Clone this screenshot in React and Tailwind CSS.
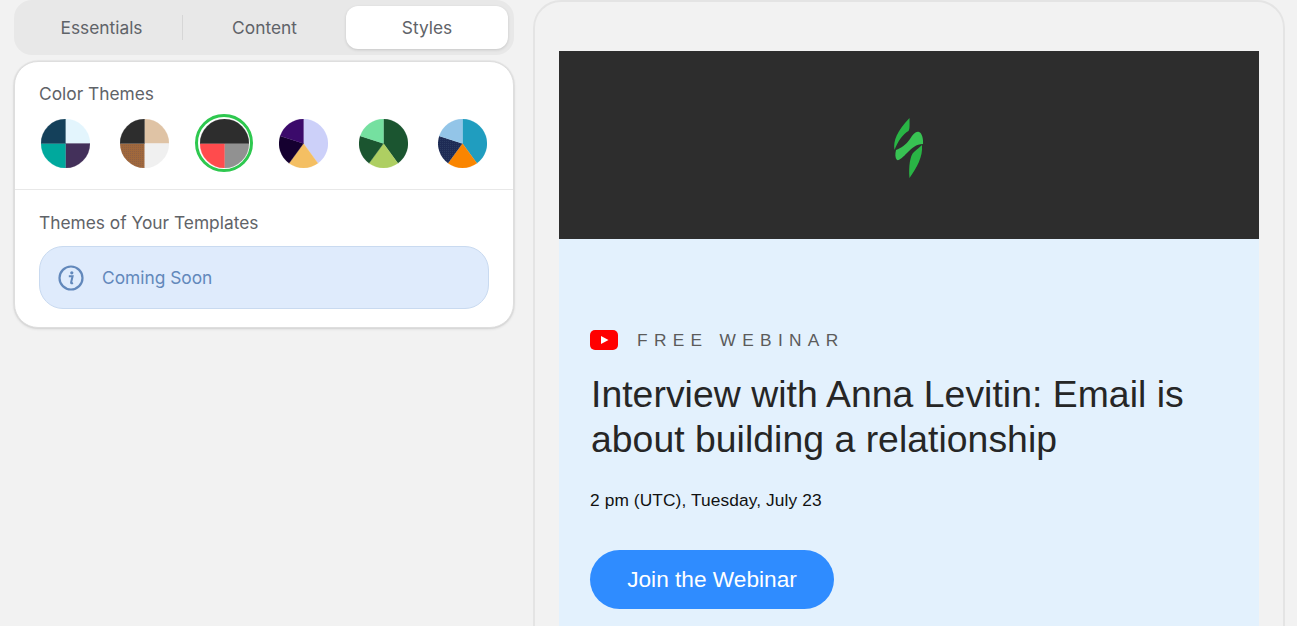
const Pie = ({ segs, id }) => {
  const R = 24.5;
  const pt = (deg) => {
    const a = (deg * Math.PI) / 180;
    return `${(R + R * Math.sin(a)).toFixed(2)} ${(R - R * Math.cos(a)).toFixed(2)}`;
  };
  return (
    <svg width="49" height="49" viewBox="0 0 49 49" className="block">
      <defs>
        <pattern id={`dots-${id}`} width="2" height="2" patternUnits="userSpaceOnUse">
          <rect width="2" height="2" fill={segs.find((s) => s.dot)?.c || "none"} />
          <rect width="1" height="1" fill={segs.find((s) => s.dot)?.dot || "none"} />
        </pattern>
      </defs>
      {segs.map((s, i) => (
        <path
          key={i}
          d={`M24.5 24.5L${pt(s.from)}A${R} ${R} 0 ${s.to - s.from > 180 ? 1 : 0} 1 ${pt(s.to)}Z`}
          fill={s.dot ? `url(#dots-${id})` : s.c}
          stroke={s.dot ? "none" : s.c}
          strokeWidth="0.25"
        />
      ))}
    </svg>
  );
};

const themes = [
  [
    { from: 0, to: 90, c: "#e3f5fd" },
    { from: 90, to: 180, c: "#43305a" },
    { from: 180, to: 270, c: "#00a99d" },
    { from: 270, to: 360, c: "#14405a" },
  ],
  [
    { from: 0, to: 90, c: "#dfc3a5" },
    { from: 90, to: 180, c: "#f0f0f0" },
    { from: 180, to: 270, c: "#a0683c", dot: "#8f6044" },
    { from: 270, to: 360, c: "#2d2d2d" },
  ],
  [
    { from: 90, to: 180, c: "#919191" },
    { from: 180, to: 270, c: "#ff4b4d" },
    { from: 270, to: 450, c: "#2d2d2d" },
  ],
  [
    { from: 0, to: 144, c: "#ccd0f9" },
    { from: 144, to: 216, c: "#f4bf63" },
    { from: 216, to: 288, c: "#150030" },
    { from: 288, to: 360, c: "#3b0a6b" },
  ],
  [
    { from: 0, to: 144, c: "#1b5530" },
    { from: 144, to: 216, c: "#aecf62" },
    { from: 216, to: 288, c: "#1b5530" },
    { from: 288, to: 360, c: "#75e0a0" },
  ],
  [
    { from: 0, to: 144, c: "#209dbf" },
    { from: 144, to: 216, c: "#fa8500" },
    { from: 216, to: 288, c: "#1e2b55", dot: "#2a3a60" },
    { from: 288, to: 360, c: "#93c5e8" },
  ],
];

const Logo = () => (
  <svg width="80" height="85" viewBox="0 0 80 85" className="block ml-[1px] mt-[4px]">
    <path d="M39.5 13C39.5 19 40 24 38.5 26C33 29 28 36 24.5 45C23 36 27 26 39.5 13Z" fill="#29b545" />
    <path d="M26 45C31 43 36 40 40 34C43 29 46 26 49 27C52 28 53.5 34 53 39C46 39 42 43 37 48C33 52 29 56 27 55C25 53 25 49 26 45Z" fill="#38c253" />
    <path d="M52 40C53 52 47 62 39.5 73C38.5 62 40 50 44 47C47 44 50 42 52 40Z" fill="#29b545" />
  </svg>
);

export default function App() {
  return (
    <div className="h-[626px] overflow-hidden bg-[#f2f2f2] flex items-start font-['Inter',sans-serif]">
      <div className="w-[500px] ml-[14px] shrink-0">
        <div className="h-[55px] bg-[#e8e8e8] rounded-[18px] px-[6px] pt-[6px] grid grid-cols-[163px_163px_162px] text-[17.33px] text-[#5f6368]">
          <div className="h-[43px] flex items-center justify-center pt-px relative">
            Essentials
            <span className="absolute right-0 top-[9px] h-[25px] w-px bg-[#d6d6d6]" />
          </div>
          <div className="h-[43px] flex items-center justify-center pt-px">Content</div>
          <div className="h-[43px] flex items-center justify-center pt-px bg-white rounded-[12px] shadow-[0_1px_3px_rgba(0,0,0,0.15)]">
            Styles
          </div>
        </div>

        <div className="mt-[6px] bg-white border border-[#dedede] rounded-[24px] shadow-[0_0_0_1px_rgba(0,0,0,0.03),0_1px_3px_rgba(0,0,0,0.12)] h-[267px]">
          <div className="px-[24px] pt-[21px] h-[128px] border-b border-[#e8e8e8]">
            <div className="text-[17.33px] leading-[22px] text-[#5f6368]">Color Themes</div>
            <div className="mt-[9px] -mx-[3px] flex justify-between">
              {themes.map((segs, i) => (
                <div
                  key={i}
                  className={
                    i === 2
                      ? "w-[58px] h-[58px] rounded-full border-[3px] border-[#2ec84f] flex items-center justify-center"
                      : "w-[58px] h-[58px] flex items-center justify-center"
                  }
                >
                  <Pie segs={segs} id={i} />
                </div>
              ))}
            </div>
          </div>
          <div className="px-[24px] pt-[22px]">
            <div className="text-[17.33px] leading-[22px] text-[#5f6368]">Themes of Your Templates</div>
            <div className="mt-[12px] h-[63px] rounded-[24px] bg-[#dfebfc] border border-[#c9daf0] flex items-center pl-[18px] gap-[18px] text-[17.33px] text-[#6288bb]">
              <svg width="26" height="26" viewBox="0 0 26 26" fill="none">
                <circle cx="13" cy="13" r="11.5" stroke="#6288bb" strokeWidth="2.2" />
                <circle cx="13.8" cy="7.8" r="1.6" fill="#6288bb" />
                <path d="M10.8 11.2H14.6L13.1 17.4C12.9 18.4 13.5 18.6 15 18" stroke="#6288bb" strokeWidth="2" fill="none" />
              </svg>
              <span>Coming Soon</span>
            </div>
          </div>
        </div>
      </div>

      <div className="ml-[19px] w-[752px] h-[700px] shrink-0 bg-[#f2f2f2] border-2 border-[#e4e4e4] rounded-t-[28px] px-[24px] pt-[49px]">
        <div className="h-[188px] bg-[#2d2d2d] flex items-center justify-center">
          <Logo />
        </div>
        <div className="bg-[#e3f1fd] h-[500px] pl-[31px] pt-[88px] font-['Liberation_Sans',sans-serif]">
          <div className="flex items-center h-[26px]">
            <svg width="28" height="20" viewBox="0 0 28 20" className="block">
              <rect width="28" height="20" rx="5" fill="#ff0000" />
              <path d="M11 6L18.5 10L11 14Z" fill="#fff" />
            </svg>
            <span className="ml-[19px] pt-px text-[17.33px] tracking-[6.3px] text-[#5b5b5b]">FREE WEBINAR</span>
          </div>
          <h1 className="mt-[19px] pl-px text-[37.33px] leading-[45px] tracking-[0.04px] text-[#262626] w-[620px]">
            Interview with Anna Levitin: Email is about building a relationship
          </h1>
          <p className="mt-[26px] text-[17.33px] leading-[24px] tracking-[0.1px] text-[#111]">2 pm (UTC), Tuesday, July 23</p>
          <div className="mt-[38px] w-[244px] h-[59px] pb-[2px] rounded-[30px] bg-[#2f8cff] text-white text-[22.67px] flex items-center justify-center">
            Join the Webinar
          </div>
        </div>
      </div>
    </div>
  );
}
